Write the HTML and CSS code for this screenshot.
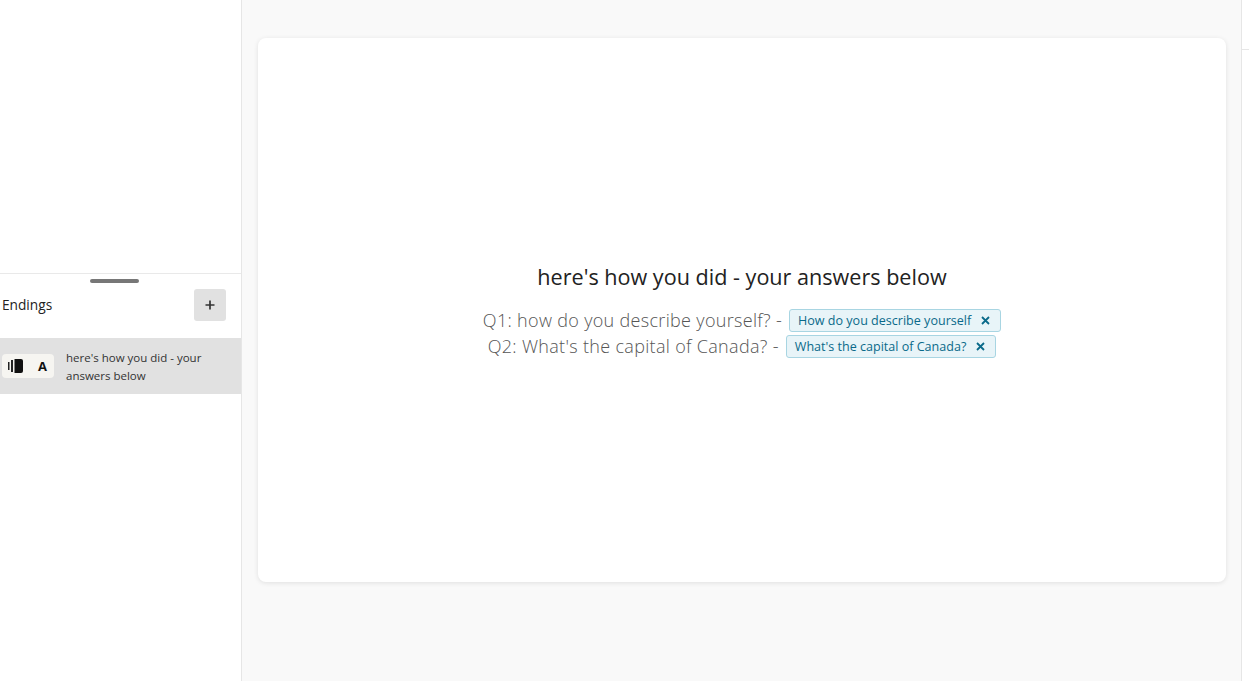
FILE: index.html
```html
<!DOCTYPE html>
<html lang="en">
<head>
<meta charset="utf-8">
<title>Endings</title>
<link rel="stylesheet" href="styles.css">
</head>
<body>
<div class="app">
  <aside class="sidebar">
    <div class="top-pane"></div>
    <div class="bottom-pane">
      <div class="handle"></div>
      <div class="endings-head">
        <span class="endings-title">Endings</span>
        <button class="add-btn" type="button" aria-label="Add ending">
          <svg width="10" height="10" viewBox="0 0 10 10"><path d="M5 .5v9M.5 5h9" stroke="#333" stroke-width="1.7" fill="none"/></svg>
        </button>
      </div>
      <div class="ending-row">
        <div class="badge">
          <svg class="badge-icon" width="15" height="14" viewBox="0 0 15 14"><rect x="0" y="3" width="1.5" height="8" fill="#222"/><rect x="3" y="1" width="2" height="12" fill="#222"/><path d="M6.5 0H13a2 2 0 0 1 2 2v10a2 2 0 0 1-2 2H6.5z" fill="#111"/></svg>
          <span class="badge-letter">A</span>
        </div>
        <p class="ending-text">here's how you did - your answers below</p>
      </div>
    </div>
  </aside>
  <main class="main">
    <section class="card">
      <h1 class="heading">here's how you did - your answers below</h1>
      <div class="answers">
        <div class="answer">Q1: how do you describe yourself? - <span class="tag">How do you describe yourself<svg class="tag-x" width="9" height="9" viewBox="0 0 9 9"><path d="M1 1l7 7M8 1L1 8" stroke="#0a6a8a" stroke-width="1.8" fill="none"/></svg></span></div>
        <div class="answer">Q2: What's the capital of Canada? - <span class="tag">What's the capital of Canada?<svg class="tag-x" width="9" height="9" viewBox="0 0 9 9"><path d="M1 1l7 7M8 1L1 8" stroke="#0a6a8a" stroke-width="1.8" fill="none"/></svg></span></div>
      </div>
    </section>
  </main>
  <aside class="right-rail"><div class="rail-head"></div></aside>
</div>
</body>
</html>
```
FILE: styles.css
```css
* { box-sizing: border-box; }
html, body { margin: 0; height: 100%; overflow: hidden; }
body { font-family: "Open Sans", "Noto Sans", sans-serif; background: #fff; color: #222; }
.app { display: flex; height: 681px; }
.sidebar { width: 242px; flex: none; border-right: 1px solid #e6e6e6; display: flex; flex-direction: column; background: #fff; }
.top-pane { height: 274px; flex: none; border-bottom: 1px solid #e9e9e9; }
.bottom-pane { flex: 1; position: relative; }
.handle { position: absolute; top: 5px; left: 90px; width: 49px; height: 4px; border-radius: 2px; background: #777; }
.endings-head { height: 64px; display: flex; align-items: center; justify-content: space-between; padding: 0 15px 2px 2px; }
.endings-title { font-size: 13.7px; font-weight: 500; color: #222; margin-bottom: 2px; }
.add-btn { width: 32px; height: 32px; border: 0; padding: 0; border-radius: 3px; background: #e1e1e1; display: flex; align-items: center; justify-content: center; }
.ending-row { height: 56px; background: #e1e1e1; display: flex; align-items: center; padding-left: 2px; gap: 12px; }
.badge { width: 52px; height: 24px; flex: none; background: #f6f5f1; border-radius: 4px; display: flex; align-items: center; justify-content: space-between; padding: 0 7px 0 6px; }
.badge-letter { font-size: 13px; font-weight: 700; color: #111; }
.ending-text { margin: 0; padding-top: 2px; font-size: 11.5px; line-height: 18px; color: #333; width: 150px; }
.main { flex: 1; background: #f9f9f9; padding: 38px 15px 99px 16px; min-width: 0; border-right: 1px solid #e6e6e6; }
.card { height: 544px; background: #fff; border-radius: 8px; box-shadow: 0 1px 5px rgba(0,0,0,.1); display: flex; flex-direction: column; align-items: center; justify-content: center; }
.heading { margin: 0 0 16px; font-size: 21.6px; line-height: 29px; font-weight: 400; color: #222; }
.answers { text-align: center; }
.answer { font-size: 18px; letter-spacing: .32px; line-height: 26px; font-weight: 300; color: #555; }
.tag { display: inline-flex; align-items: center; height: 23px; margin-left: 2px; padding: 0 10px 0 8px; vertical-align: 2px; font-size: 12.55px; letter-spacing: 0; font-weight: 400; color: #0a6a8a; background: #e8f4f8; border: 1px solid #a8d5e2; border-radius: 3px; }
.tag-x { margin-left: 10px; }
.right-rail { width: 7px; flex: none; background: #fff; }
.rail-head { height: 50px; border-bottom: 1px solid #e6e6e6; }
```
